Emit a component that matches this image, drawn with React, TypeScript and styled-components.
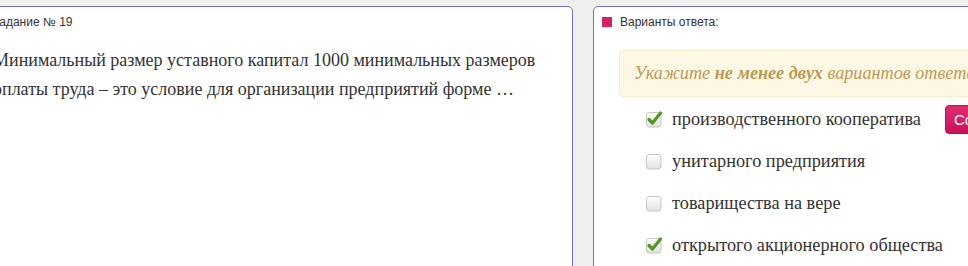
import styled, { createGlobalStyle } from "styled-components";

const GlobalStyle = createGlobalStyle`
    html, body {
        margin: 0;
        padding: 0;
        background: #efefef;
        overflow: hidden;
    }
`

const answers = [
    {text: "производственного кооператива", checked: true},
    {text: "унитарного предприятия", checked: false},
    {text: "товарищества на вере", checked: false},
    {text: "открытого акционерного общества", checked: true},
];

const CheckBox = ({checked}: { checked: boolean }) => {
    return (
        <StyledCheck width="18" height="18" viewBox="0 0 18 18">
            <defs>
                <linearGradient id="boxFill" x1="0" y1="0" x2="0" y2="1">
                    <stop offset="0" stopColor="#ffffff"/>
                    <stop offset="1" stopColor="#e2e2e2"/>
                </linearGradient>
            </defs>
            <rect x="1.5" y="2.5" width="14.5" height="14.5" rx="3" fill="url(#boxFill)" stroke="#c4c4c4"/>
            {checked && (
                <path d="M4 9.5 L7.5 13 L15.5 3" fill="none" stroke="#4f9a1e" strokeWidth="3.2"
                      strokeLinecap="round" strokeLinejoin="round"/>
            )}
        </StyledCheck>
    );
};

export default function App() {
    return (
        <>
            <GlobalStyle/>
            <Page>
                <TaskPanel>
                    <PanelTitle>Задание № 19</PanelTitle>
                    <Question>
                        Минимальный размер уставного капитал 1000 минимальных размеров оплаты труда – это
                        условие для организации предприятий форме …
                    </Question>
                </TaskPanel>
                <AnswerPanel>
                    <AnswerTitle>
                        <Marker/>
                        Варианты ответа:
                    </AnswerTitle>
                    <Notice>Укажите <b>не менее двух</b> вариантов ответа</Notice>
                    <AnswerList>
                        {answers.map((a, i) => (
                            <AnswerRow key={a.text}>
                                <CheckBox checked={a.checked}/>
                                <AnswerText>{a.text}</AnswerText>
                                {i === 0 && <SubmitButton>Сохранить</SubmitButton>}
                            </AnswerRow>
                        ))}
                    </AnswerList>
                </AnswerPanel>
            </Page>
        </>
    );
}

const Page = styled.div`
    display: flex;
    gap: 20px;
    padding-top: 6px;
    margin-left: -19px;
    height: 300px;
`
const Panel = styled.div`
    flex: none;
    background: #fff;
    border: 1px solid #7373c9;
    border-radius: 5px;
    box-sizing: border-box;
    height: 320px;
`
const TaskPanel = styled(Panel)`
    width: 592px;
    padding: 8px 10px 8px 11px;
`
const PanelTitle = styled.div`
    font-family: "Liberation Sans", Arial, sans-serif;
    font-size: 12px;
    color: #333;
    line-height: 14px;
    margin-left: -1px;
`
const Question = styled.p`
    margin: 17px 0 0;
    font-family: "Liberation Serif", serif;
    font-size: 18px;
    line-height: 29px;
    color: #333;
`
const AnswerPanel = styled(Panel)`
    width: 420px;
    padding: 8px 8px;
`
const AnswerTitle = styled.div`
    display: flex;
    align-items: center;
    gap: 8px;
    font-family: "Liberation Sans", Arial, sans-serif;
    font-size: 12px;
    color: #333;
    line-height: 14px;
`
const Marker = styled.span`
    width: 10px;
    height: 10px;
    background: #d6206a;
`
const Notice = styled.div`
    margin: 21px 0 0 17px;
    padding: 0 14px;
    height: 47px;
    line-height: 45px;
    box-sizing: border-box;
    white-space: nowrap;
    background: #fcf8e5;
    border: 1px solid #f7ecc9;
    border-radius: 4px;
    font-family: "Liberation Serif", serif;
    font-style: italic;
    font-size: 18.2px;
    color: #c09853;
`
const AnswerList = styled.div`
    margin: 1px 0 0 43px;
    display: flex;
    flex-direction: column;
`
const AnswerRow = styled.div`
    display: flex;
    align-items: center;
    height: 42px;
`
const StyledCheck = styled.svg`
    flex: none;
    margin-right: 9px;
`
const AnswerText = styled.span`
    font-family: "Liberation Serif", serif;
    font-size: 18.3px;
    color: #333;
    white-space: nowrap;
`
const SubmitButton = styled.button`
    margin-left: 24px;
    height: 29px;
    padding: 0 8px;
    border: 1px solid #bd1254;
    border-radius: 4px;
    background: linear-gradient(#e02d6f, #c8125a);
    color: #fff;
    font-family: "Liberation Sans", Arial, sans-serif;
    font-size: 15px;
    white-space: nowrap;
`
